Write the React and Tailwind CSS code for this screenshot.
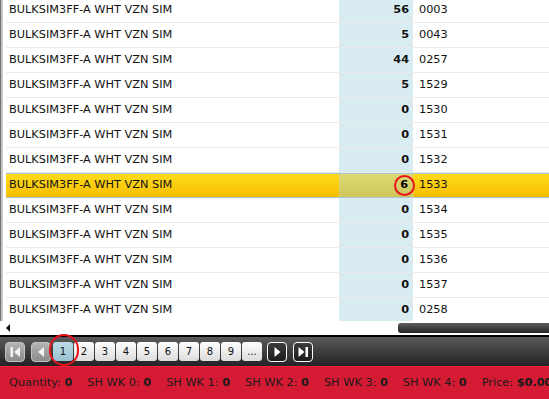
import React from 'react';

const rows = [
  { qty: 56, code: '0003' },
  { qty: 5, code: '0043' },
  { qty: 44, code: '0257' },
  { qty: 5, code: '1529' },
  { qty: 0, code: '1530' },
  { qty: 0, code: '1531' },
  { qty: 0, code: '1532' },
  { qty: 6, code: '1533', selected: true },
  { qty: 0, code: '1534' },
  { qty: 0, code: '1535' },
  { qty: 0, code: '1536' },
  { qty: 0, code: '1537' },
  { qty: 0, code: '0258' },
];

const pages = ['1', '2', '3', '4', '5', '6', '7', '8', '9', '...'];

const stats = [
  ['Quantity:', '0'],
  ['SH WK 0:', '0'],
  ['SH WK 1:', '0'],
  ['SH WK 2:', '0'],
  ['SH WK 3:', '0'],
  ['SH WK 4:', '0'],
  ['Price:', '$0.00'],
];

const Row = ({ row }) => {
  if (row.selected) {
    return (
      <div className="flex h-[25px] border-y border-[#a9c6d2] bg-gradient-to-b from-[#ffdc1a] to-[#f7bd00]">
        <div className="w-[333px] pl-[3px] flex items-center text-[#111]">BULKSIM3FF-A WHT VZN SIM</div>
        <div className="relative w-[74px] flex items-center justify-end pr-[4px] font-bold bg-gradient-to-b from-[#dcd971] to-[#cfc55c] border-x border-[#d8cf7a]">
          {row.qty}
          <span className="absolute right-[-3px] top-[1px] w-[21px] h-[21px] rounded-full border-2 border-[#e8141c]" />
        </div>
        <div className="flex-1 pl-[6px] flex items-center text-[#111]">{row.code}</div>
      </div>
    );
  }
  return (
    <div className="flex h-[25px] border-b border-[#ebebeb]">
      <div className="w-[333px] pl-[3px] flex items-center text-[#111]">BULKSIM3FF-A WHT VZN SIM</div>
      <div className="w-[74px] flex items-center justify-end pr-[4px] font-bold bg-[#d9ecf2] text-[#111]">{row.qty}</div>
      <div className="flex-1 pl-[6px] flex items-center text-[#111]">{row.code}</div>
    </div>
  );
};

const NavIcon = ({ type }) => {
  if (type === 'first') {
    return (
      <svg width="12" height="12" viewBox="0 0 12 12">
        <rect x="1.5" y="1" width="2.5" height="10" fill="#f2f2f2" />
        <polygon points="11,1 11,11 5,6" fill="#f2f2f2" />
      </svg>
    );
  }
  if (type === 'prev') {
    return (
      <svg width="12" height="12" viewBox="0 0 12 12">
        <polygon points="9,1 9,11 3,6" fill="#f2f2f2" />
      </svg>
    );
  }
  if (type === 'next') {
    return (
      <svg width="12" height="12" viewBox="0 0 12 12">
        <polygon points="3.5,1 3.5,11 9.5,6" fill="#fff" />
      </svg>
    );
  }
  return (
    <svg width="12" height="12" viewBox="0 0 12 12">
      <polygon points="1.5,1 1.5,11 7.5,6" fill="#fff" />
      <rect x="8.5" y="1" width="2.5" height="10" fill="#fff" />
    </svg>
  );
};

export default function App() {
  return (
    <div className="w-[549px] h-[399px] overflow-hidden flex flex-col bg-white font-['DejaVu_Sans',sans-serif] text-[11.3px]">
      {/* grid body */}
      <div className="h-[321px] flex overflow-hidden">
        <div className="w-px bg-[#6f6f6f]" />
        <div className="w-[2px] bg-[#c6c6c6]" />
        <div className="w-[3px] bg-white" />
        <div className="flex-1 overflow-hidden">
          <div className="-mt-[2px]">
            {rows.map((row) => (
              <Row key={row.code} row={row} />
            ))}
          </div>
        </div>
      </div>

      {/* horizontal scrollbar */}
      <div className="h-[14px] flex items-center justify-between bg-white">
        <svg width="12" height="8" viewBox="0 0 12 8" className="ml-[5px]">
          <polygon points="5,0 5,8 1,4" fill="#111" />
        </svg>
        <div className="w-[151px] h-[10px] rounded-l-[3px] bg-gradient-to-b from-[#5e5e5e] to-[#252525]" />
      </div>

      <div className="h-[2px] bg-black" />

      {/* pager */}
      <div className="h-[29px] flex items-center pl-[5px] bg-gradient-to-b from-[#5b5b5b] to-[#232323]">
        <button className="w-[20px] h-[20px] rounded-[4px] border border-[#c4c4c4] bg-gradient-to-b from-[#b4b4b4] to-[#8c8c8c] flex items-center justify-center">
          <NavIcon type="first" />
        </button>
        <button className="ml-[6px] w-[20px] h-[20px] rounded-[4px] border border-[#c4c4c4] bg-gradient-to-b from-[#b4b4b4] to-[#8c8c8c] flex items-center justify-center">
          <NavIcon type="prev" />
        </button>
        <div className="relative ml-[2px] flex gap-px">
          {pages.map((p) =>
            p === '1' ? (
              <div key={p} className="w-[20px] h-[19px] rounded-[3px] bg-gradient-to-b from-[#bcdbe6] to-[#98c3d1] flex items-center justify-center text-[10px] text-[#111]">
                {p}
              </div>
            ) : (
              <div key={p} className="w-[20px] h-[19px] rounded-[3px] bg-gradient-to-b from-white to-[#dcdcdc] flex items-center justify-center text-[10px] text-[#111]">
                {p}
              </div>
            )
          )}
          <span className="absolute left-[-4px] top-[-8px] w-[30px] h-[32px] rounded-full border-[2.5px] border-[#e8141c]" />
        </div>
        <button className="ml-[5px] w-[20px] h-[20px] rounded-[4px] border-[1.5px] border-white bg-gradient-to-b from-[#3c3c3c] to-[#1c1c1c] flex items-center justify-center">
          <NavIcon type="next" />
        </button>
        <button className="ml-[6px] w-[20px] h-[20px] rounded-[4px] border-[1.5px] border-white bg-gradient-to-b from-[#3c3c3c] to-[#1c1c1c] flex items-center justify-center">
          <NavIcon type="last" />
        </button>
      </div>

      <div className="h-px bg-[#ff1f3a]" />

      {/* status bar */}
      <div className="flex-1 flex items-center gap-[15px] pl-[9px] bg-[#d51b34] text-[#1a1a1a] whitespace-nowrap overflow-hidden">
        {stats.map(([label, value]) => (
          <span key={label} className="shrink-0">
            {label} <span className="font-bold">{value}</span>
          </span>
        ))}
      </div>
    </div>
  );
}
